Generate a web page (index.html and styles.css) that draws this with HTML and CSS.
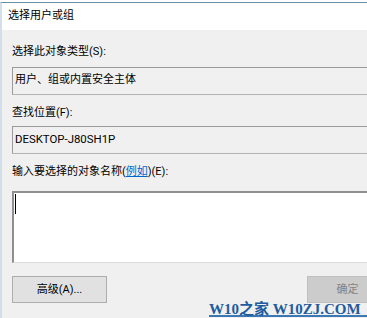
FILE: index.html
```html
<!DOCTYPE html>
<html lang="zh-CN">
<head>
<meta charset="utf-8">
<title>选择用户或组</title>
<link rel="stylesheet" href="styles.css">
</head>
<body>
<div class="window">
  <div class="titlebar">选择用户或组</div>
  <div class="content">
    <div class="label label-first">选择此对象类型(S):</div>
    <div class="field">用户、组或内置安全主体</div>
    <div class="label">查找位置(F):</div>
    <div class="field field-latin">DESKTOP-J80SH1P</div>
    <div class="label label-third">输入要选择的对象名称(<span class="link">例如</span>)(E):</div>
    <div class="input"><span class="caret"></span></div>
    <div class="buttons">
      <div class="btn">高级(A)...</div>
      <div class="btn btn-disabled">确定</div>
    </div>
  </div>
  <div class="watermark">W10之家 W10ZJ.COM</div>
</div>
</body>
</html>
```

FILE: styles.css
```css
html, body {
  margin: 0;
  padding: 0;
  width: 367px;
  height: 318px;
  overflow: hidden;
  background: #f0f0f0;
}
.window {
  position: relative;
  width: 400px;
  height: 318px;
  padding-top: 2px;
  box-sizing: border-box;
  background: #ffffff;
  font-family: "Roboto", "Noto Sans CJK SC", sans-serif;
  font-size: 11px;
  color: #000;
}
.titlebar {
  border-top: 1px solid #6a8fa6;
  border-left: 2px solid #d2dee9;
  height: 27px;
  line-height: 26px;
  padding-left: 6px;
  background: #ffffff;
}
.content {
  border-left: 2px solid #d2dee9;
  background: #f0f0f0;
  height: 288px;
  padding: 0 12px 0 10px;
  display: flex;
  flex-direction: column;
}
.label {
  height: 14px;
  line-height: 14px;
  margin-top: 11px;
  margin-bottom: 6px;
}
.label-first {
  margin-top: 15px;
  margin-bottom: 8px;
}
.label-third {
  margin-top: 11px;
  margin-bottom: 12px;
}
.link {
  color: #0066cc;
  text-decoration: underline;
}
.field {
  height: 28px;
  box-sizing: border-box;
  border: 1px solid #9a9a9a;
  border-bottom-color: #b4b4b4;
  padding-left: 2px;
  line-height: 24px;
  background: #f0f0f0;
}
.field-latin {
  font-size: 11.4px;
  padding-left: 2px;
}
.input {
  height: 72px;
  box-sizing: border-box;
  border-top: 2px solid #8f8f8f;
  border-left: 2px solid #8f8f8f;
  border-bottom: 1px solid #dcdcdc;
  background: #ffffff;
  padding: 1px 0 0 1px;
}
.caret {
  display: block;
  width: 1px;
  height: 20px;
  background: #000;
}
.buttons {
  margin-top: 13px;
  display: flex;
  justify-content: space-between;
}
.btn {
  width: 95px;
  height: 27px;
  box-sizing: border-box;
  border: 1px solid #adadad;
  background: #e1e1e1;
  text-align: center;
  line-height: 25px;
}
.btn-disabled {
  width: 81px;
  background: #cccccc;
  border-color: #bfbfbf;
  color: #838383;
}
.watermark {
  position: absolute;
  left: 209px;
  top: 300px;
  width: 158px;
  height: 15px;
  border-bottom: 2px solid #3c78b4;
  font-family: "Liberation Serif", "Noto Sans CJK SC", serif;
  font-weight: bold;
  font-size: 15px;
  line-height: 19px;
  color: #1e5c9e;
  white-space: nowrap;
}
```
